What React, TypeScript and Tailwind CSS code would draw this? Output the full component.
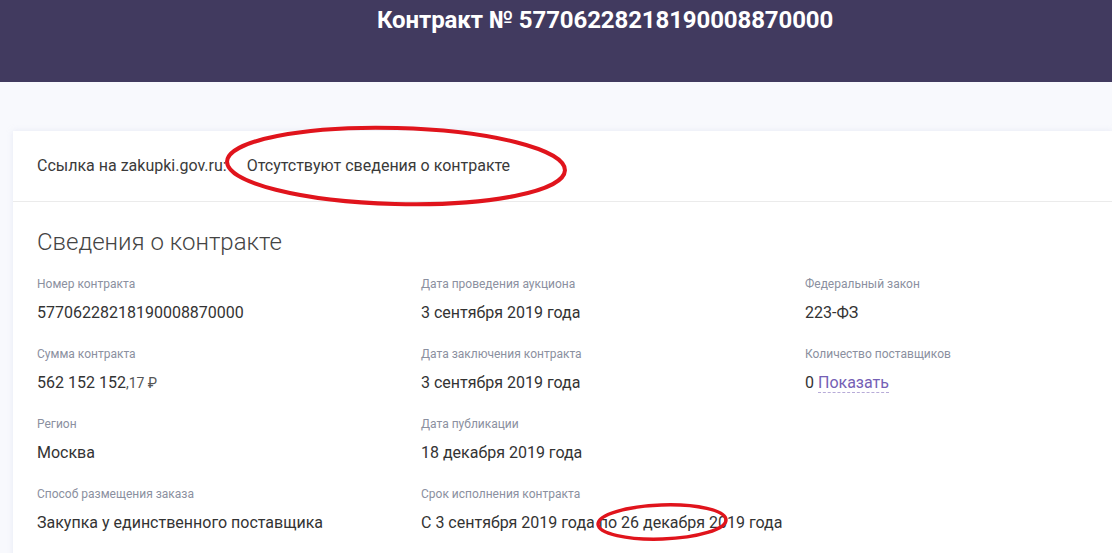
import React from "react";

type Field = {
  label: string;
  value: React.ReactNode;
};

const columns: Field[][] = [
  [
    { label: "Номер контракта", value: "57706228218190008870000" },
    {
      label: "Сумма контракта",
      value: (
        <>
          562 152 152<span className="text-[14px] text-[#555]">,17 ₽</span>
        </>
      ),
    },
    { label: "Регион", value: "Москва" },
    { label: "Способ размещения заказа", value: "Закупка у единственного поставщика" },
  ],
  [
    { label: "Дата проведения аукциона", value: "3 сентября 2019 года" },
    { label: "Дата заключения контракта", value: "3 сентября 2019 года" },
    { label: "Дата публикации", value: "18 декабря 2019 года" },
    { label: "Срок исполнения контракта", value: "С 3 сентября 2019 года по 26 декабря 2019 года" },
  ],
  [
    { label: "Федеральный закон", value: "223-ФЗ" },
    {
      label: "Количество поставщиков",
      value: (
        <>
          0{" "}
          <span className="text-[#7560b5] border-b border-dashed border-[#b7abd8] cursor-pointer">
            Показать
          </span>
        </>
      ),
    },
  ],
];

const FieldItem = ({ field }: { field: Field }) => (
  <div className="h-[70px]">
    <p className="text-[12px] leading-[18px] text-[#8b90a0]">{field.label}</p>
    <p className="mt-[10px] text-[16px] leading-[20px] text-[#333]">{field.value}</p>
  </div>
);

export default function App() {
  return (
    <div
      className="relative w-[1112px] h-[553px] overflow-hidden bg-[#f8f9fd]"
      style={{ fontFamily: "Roboto, 'Liberation Sans', sans-serif" }}
    >
      {/* Header */}
      <div className="h-[82px] bg-[#413a5f] pl-[377px] pt-[4px]">
        <h1 className="text-[24px] leading-[32px] font-bold text-white tracking-[-0.1px]">
          Контракт № 57706228218190008870000
        </h1>
      </div>

      {/* Card */}
      <div className="ml-[13px] mt-[49px] pb-[40px] bg-white shadow-[0_0_6px_rgba(200,205,230,0.35)]">
        <div className="h-[71px] px-[24px] flex items-center gap-[20px] border-b border-[#ebebeb] text-[16px] text-[#3a3a3a]">
          <span>Ссылка на zakupki.gov.ru:</span>
          <span>Отсутствуют сведения о контракте</span>
        </div>

        <div className="px-[24px] pt-[25px]">
          <h2 className="text-[24px] leading-[30px] font-light text-[#444]">
            Сведения о контракте
          </h2>
          <div className="mt-[18px] grid grid-cols-[384px_384px_1fr]">
            {columns.map((col, i) => (
              <div key={i}>
                {col.map((f) => (
                  <FieldItem field={f} key={f.label} />
                ))}
              </div>
            ))}
          </div>
        </div>
      </div>

      {/* Red annotation marks */}
      <svg
        className="absolute inset-0 pointer-events-none"
        width="1112"
        height="553"
        viewBox="0 0 1112 553"
      >
        <ellipse
          cx="396"
          cy="166"
          rx="169"
          ry="38"
          transform="rotate(1.5 396 166)"
          fill="none"
          stroke="#e0141c"
          strokeWidth="4"
        />
        <ellipse
          cx="662"
          cy="522"
          rx="64"
          ry="17"
          transform="rotate(-2 662 522)"
          fill="none"
          stroke="#e0141c"
          strokeWidth="3.5"
        />
      </svg>
    </div>
  );
}
